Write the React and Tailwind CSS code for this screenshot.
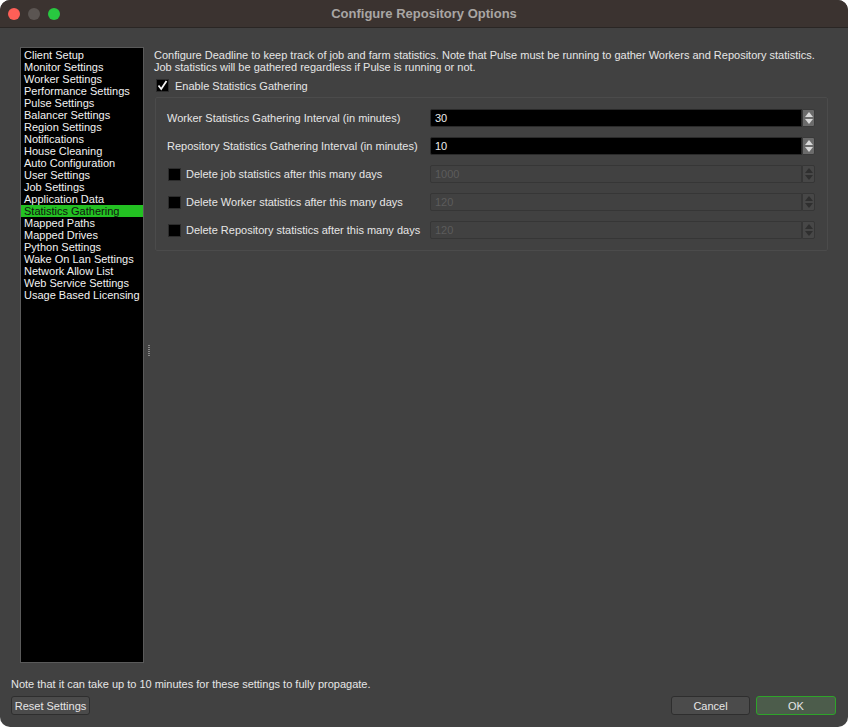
import React from "react";

const items = [
  "Client Setup","Monitor Settings","Worker Settings","Performance Settings","Pulse Settings",
  "Balancer Settings","Region Settings","Notifications","House Cleaning","Auto Configuration",
  "User Settings","Job Settings","Application Data","Statistics Gathering","Mapped Paths",
  "Mapped Drives","Python Settings","Wake On Lan Settings","Network Allow List",
  "Web Service Settings","Usage Based Licensing",
];

function Spinner({ disabled }) {
  const tri = disabled ? "#2f2f2f" : "#d8d8d8";
  return (
    <div className={"w-[13px] h-full flex flex-col items-center justify-center gap-[2px] rounded-r-[2px] border " + (disabled ? "bg-[#474747] border-[#363636]" : "bg-[#6b6b6b] border-[#3a3a3a]")}>
      <svg width="8" height="5" viewBox="0 0 8 5"><path d="M0 5 L4 0 L8 5 Z" fill={tri} /></svg>
      <svg width="8" height="5" viewBox="0 0 8 5"><path d="M0 0 L4 5 L8 0 Z" fill={tri} /></svg>
    </div>
  );
}

function SpinBox({ value, disabled }) {
  return (
    <div className="flex h-[18px] w-[385px]">
      <div className={"flex-1 h-full flex items-center pl-[4px] rounded-l-[2px] border " + (disabled ? "bg-[#414141] border-[#363636] text-[#5c5c5c]" : "bg-black border-[#2a2a2a] text-[#ececec]")}>
        {value}
      </div>
      <Spinner disabled={disabled} />
    </div>
  );
}

function Box({ checked }) {
  return (
    <div className="w-[13px] h-[13px] bg-black border border-[#2c2c2c] flex items-center justify-center shrink-0">
      {checked && (
        <svg width="11" height="11" viewBox="0 0 11 11">
          <path d="M1.5 5.5 L4.2 9 L9.5 1" stroke="#f2f2f2" strokeWidth="1.8" fill="none" />
        </svg>
      )}
    </div>
  );
}

export default function App() {
  return (
    <div className="w-[848px] h-[727px] bg-white" style={{ fontFamily: '"Liberation Sans", Arial, sans-serif' }}>
      <div className="w-full h-full bg-[#414141] rounded-[10px] overflow-hidden flex flex-col text-[11px] leading-[12px] text-[#e6e6e6]">
        {/* title bar */}
        <div className="h-[28px] shrink-0 bg-[#3b3330] border-b border-[#2a2624] flex items-center relative">
          <div className="flex items-center gap-[8px] pl-[8px]">
            <div className="w-[12px] h-[12px] rounded-full bg-[#fe5f57]" />
            <div className="w-[12px] h-[12px] rounded-full bg-[#5b5552]" />
            <div className="w-[12px] h-[12px] rounded-full bg-[#28c840]" />
          </div>
          <div className="absolute inset-0 flex items-center justify-center text-[13px] font-bold text-[#a9a6a4]">
            Configure Repository Options
          </div>
        </div>

        {/* main */}
        <div className="flex-1 flex pt-[19px] pl-[20px] pr-[20px] min-h-0">
          <div className="w-[124px] h-[616px] bg-black border border-[#5a5a5a] pt-[1px] text-[#f2f2f2]">
            {items.map((it) => (
              <div key={it} className={"h-[12px] pl-[3px] leading-[12px] whitespace-nowrap " + (it === "Statistics Gathering" ? "bg-[#23c122] text-[#111]" : "")}>
                {it}
              </div>
            ))}
          </div>
          <div className="w-[10px] flex items-center justify-center">
            <div className="flex flex-col gap-[1px] mt-[-24px]">
              {[0,1,2,3,4,5].map((i) => (
                <div key={i} className="w-[2px] h-[1px] bg-[#8a8a8a]" />
              ))}
            </div>
          </div>
          <div className="flex-1 flex flex-col pt-[2px]">
            <div className="text-[#e6e6e6] leading-[12px]">
              Configure Deadline to keep track of job and farm statistics. Note that Pulse must be running to gather Workers and Repository statistics.
              <br />
              Job statistics will be gathered regardless if Pulse is running or not.
            </div>
            <div className="flex items-center gap-[6px] mt-[6px] ml-[2px]">
              <Box checked />
              <span>Enable Statistics Gathering</span>
            </div>
            <div className="mt-[5px] ml-[1px] border border-[#4b4b4b] rounded-[2px] pt-[11px] pb-[11px] pl-[11px] pr-[12px] flex flex-col gap-[10px]">
              <div className="flex items-center justify-between">
                <span>Worker Statistics Gathering Interval (in minutes)</span>
                <SpinBox value="30" />
              </div>
              <div className="flex items-center justify-between">
                <span>Repository Statistics Gathering Interval (in minutes)</span>
                <SpinBox value="10" />
              </div>
              <div className="flex items-center justify-between">
                <div className="flex items-center gap-[5px] pl-[1px]">
                  <Box />
                  <span>Delete job statistics after this many days</span>
                </div>
                <SpinBox value="1000" disabled />
              </div>
              <div className="flex items-center justify-between">
                <div className="flex items-center gap-[5px] pl-[1px]">
                  <Box />
                  <span>Delete Worker statistics after this many days</span>
                </div>
                <SpinBox value="120" disabled />
              </div>
              <div className="flex items-center justify-between">
                <div className="flex items-center gap-[5px] pl-[1px]">
                  <Box />
                  <span>Delete Repository statistics after this many days</span>
                </div>
                <SpinBox value="120" disabled />
              </div>
            </div>
          </div>
        </div>

        {/* bottom */}
        <div className="shrink-0 pl-[11px] pr-[12px] pb-[12px]">
          <div className="h-[12px] mb-[6px]">Note that it can take up to 10 minutes for these settings to fully propagate.</div>
          <div className="flex items-center">
            <button className="h-[19px] w-[79px] bg-[#4b4b4b] border border-[#2e2e2e] rounded-[3px] text-[#e6e6e6] text-[11px] flex items-center justify-center">
              Reset Settings
            </button>
            <div className="flex-1" />
            <button className="h-[19px] w-[79px] bg-[#4b4b4b] border border-[#2e2e2e] rounded-[3px] text-[#e6e6e6] text-[11px] flex items-center justify-center">
              Cancel
            </button>
            <button className="ml-[6px] h-[19px] w-[80px] bg-[#4c5c4b] border border-[#2ea42a] rounded-[3px] text-[#e6e6e6] text-[11px] flex items-center justify-center">
              OK
            </button>
          </div>
        </div>
      </div>
    </div>
  );
}
